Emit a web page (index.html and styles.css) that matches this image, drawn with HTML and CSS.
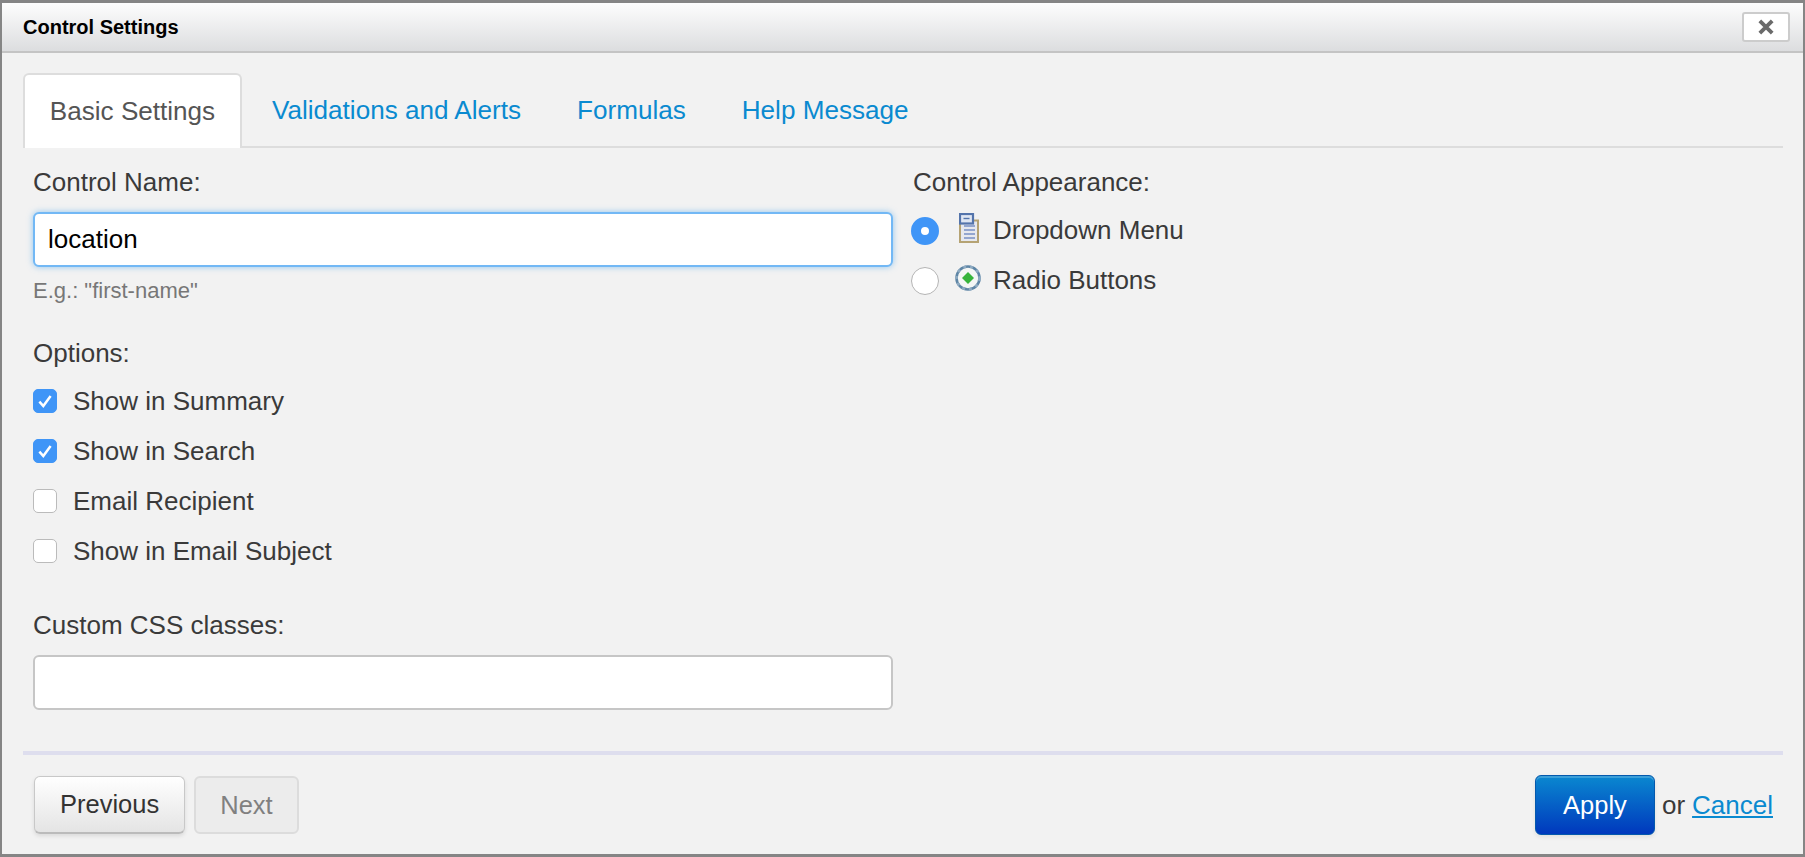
FILE: index.html
```html
<!DOCTYPE html>
<html lang="en">
<head>
    <meta charset="UTF-8">
    <title>Control Settings</title>
    <link rel="stylesheet" href="styles.css">
</head>
<body>
<div class="dialog">
    <!-- Title bar -->
    <div class="titlebar">
        <span class="title">Control Settings</span>
        <button class="close" type="button" aria-label="Close">
            <svg width="18" height="18" viewBox="0 0 16 16"><path d="M2.5 2.5L13.5 13.5M13.5 2.5L2.5 13.5" stroke="#6a6a6a" stroke-width="3.4" fill="none"/></svg>
        </button>
    </div>

    <div class="content">
        <!-- Tabs -->
        <ul class="tabs">
            <li class="tab active">Basic Settings</li>
            <li class="tab"><a href="#">Validations and Alerts</a></li>
            <li class="tab"><a href="#">Formulas</a></li>
            <li class="tab"><a href="#">Help Message</a></li>
        </ul>

        <div class="columns">
            <div class="col-left">
                <div class="label first">Control Name:</div>
                <input class="text-input focused" type="text" value="location">
                <div class="hint">E.g.: "first-name"</div>

                <div class="label options-label">Options:</div>
                <label class="check-row">
                    <span class="check on"><svg width="18" height="18" viewBox="0 0 16 16"><path d="M3 8.5L6.5 12.5L13 3.5" stroke="#fff" stroke-width="2.2" fill="none"/></svg></span>
                    Show in Summary
                </label>
                <label class="check-row">
                    <span class="check on"><svg width="18" height="18" viewBox="0 0 16 16"><path d="M3 8.5L6.5 12.5L13 3.5" stroke="#fff" stroke-width="2.2" fill="none"/></svg></span>
                    Show in Search
                </label>
                <label class="check-row"><span class="check"></span>Email Recipient</label>
                <label class="check-row"><span class="check"></span>Show in Email Subject</label>

                <div class="label css-label">Custom CSS classes:</div>
                <input class="text-input" type="text">
            </div>

            <div class="col-right">
                <div class="label first">Control Appearance:</div>
                <label class="radio-row">
                    <span class="radio on"></span>
                    <svg class="row-icon" width="20" height="30" viewBox="0 0 20 30">
                        <rect x="1" y="7.5" width="18" height="21.5" fill="#e6e8ee" stroke="#b5a374" stroke-width="2"/>
                        <path d="M5 13H16M5 17H16M5 21H16M5 25H16" stroke="#93a6cf" stroke-width="2"/>
                        <rect x="1" y="1" width="13" height="9.5" fill="#dfe6f2" stroke="#5474ab" stroke-width="2.2"/>
                        <path d="M4.5 5.5H10.5" stroke="#5474ab" stroke-width="1.4"/>
                    </svg>
                    Dropdown Menu
                </label>
                <label class="radio-row">
                    <span class="radio"></span>
                    <svg class="row-icon round" width="26" height="26" viewBox="0 0 26 26">
                        <circle cx="13" cy="13" r="11.5" fill="#f4f6f5" stroke="#5f86a6" stroke-width="2.6"/>
                        <circle cx="13" cy="13" r="11.5" fill="none" stroke="#8fabc2" stroke-width="2.6" stroke-dasharray="3 4"/>
                        <path d="M13 7L19 13L13 19L7 13Z" fill="#37b43c"/>
                    </svg>
                    Radio Buttons
                </label>
            </div>
        </div>

        <!-- Footer -->
        <div class="footer">
            <div class="footer-left">
                <button class="btn" type="button">Previous</button>
                <button class="btn disabled" type="button">Next</button>
            </div>
            <div class="footer-right">
                <button class="btn-primary" type="button">Apply</button>
                <span class="or">or</span>
                <a class="cancel" href="#">Cancel</a>
            </div>
        </div>
    </div>
</div>
</body>
</html>
```

FILE: styles.css
```css
* {
    box-sizing: border-box;
}
html, body {
    height: 100%;
}
body {
    margin: 0;
    font-family: "Liberation Sans", Arial, sans-serif;
    font-size: 26px;
    color: #3a3a3a;
    background-color: #f2f2f2;
}
.dialog {
    height: 857px;
    border: solid #858585;
    border-width: 3px 2px 3px 2px;
    display: flex;
    flex-direction: column;
}
.titlebar {
    height: 50px;
    flex: none;
    display: flex;
    align-items: center;
    justify-content: space-between;
    padding: 0 13px 0 21px;
    background: linear-gradient(#fdfdfd, #dcdddf);
    border-bottom: 2px solid #c4c4c4;
}
.title {
    font-size: 20px;
    font-weight: bold;
    color: #000;
}
.close {
    width: 48px;
    height: 30px;
    padding: 0;
    display: flex;
    align-items: center;
    justify-content: center;
    background-color: #fff;
    border: 2px solid #ccc;
    border-radius: 3px;
}
.content {
    flex: 1;
    padding: 20px 20px 0 21px;
    display: flex;
    flex-direction: column;
}
.tabs {
    list-style: none;
    margin: 0;
    padding: 0;
    height: 75px;
    flex: none;
    display: flex;
    border-bottom: 2px solid #ddd;
}
.tab {
    height: 75px;
    padding: 23px 28px 0 28px;
    line-height: 28px;
    font-size: 26.1px;
}
.tab a {
    color: #0a8ad0;
    text-decoration: none;
}
.tab.active {
    width: 219px;
    padding: 22px 0 0 0;
    margin-right: 2px;
    text-align: center;
    color: #555;
    background-color: #fff;
    border: 2px solid #ddd;
    border-bottom: 0;
    border-radius: 6px 6px 0 0;
}
.columns {
    flex: 1;
    display: grid;
    grid-template-columns: 860px 1fr;
    column-gap: 18px;
    padding-left: 10px;
}
.label {
    line-height: 28px;
}
.label.first {
    margin-top: 20px;
}
.text-input {
    display: block;
    width: 100%;
    height: 55px;
    padding: 0 13px;
    font-family: inherit;
    font-size: 26px;
    color: #000;
    background-color: #fff;
    border: 2px solid #c6c6c6;
    border-radius: 6px;
    outline: none;
}
.text-input.focused {
    margin-top: 16px;
    border-color: #72b8f5;
    box-shadow: 0 0 6px rgba(82, 168, 236, 0.6);
}
.hint {
    margin-top: 11px;
    font-size: 22px;
    line-height: 26px;
    color: #777;
}
.options-label {
    margin-top: 35px;
}
.check-row {
    height: 50px;
    display: flex;
    align-items: center;
}
.options-label + .check-row {
    margin-top: 9px;
}
.check {
    width: 24px;
    height: 24px;
    margin-right: 16px;
    display: flex;
    align-items: center;
    justify-content: center;
    background-color: #fff;
    border: 1px solid #bbb;
    border-radius: 5px;
}
.check.on {
    background-color: #3f95f7;
    border-color: #3f95f7;
}
.css-label {
    margin-top: 35px;
    margin-bottom: 16px;
}
.radio-row {
    height: 50px;
    display: flex;
    align-items: center;
}
.col-right .label.first {
    padding-left: 2px;
}
.label.first + .radio-row {
    margin-top: 9px;
}
.radio {
    width: 28px;
    height: 28px;
    margin: 2px 20px 0 0;
    flex: none;
    background-color: #fff;
    border: 1px solid #b4b4b4;
    border-radius: 50%;
}
.radio.on {
    border: 10px solid #3f95f7;
}
.row-icon {
    margin-top: -4px;
    margin-right: 14px;
    flex: none;
}
.row-icon.round {
    margin-left: -4px;
    margin-right: 12px;
}
.footer {
    height: 103px;
    flex: none;
    display: flex;
    align-items: flex-start;
    justify-content: space-between;
    padding: 20px 10px 0 11px;
    border-top: 4px solid #dedeee;
}
.footer-left {
    margin-top: 1px;
    display: flex;
    gap: 9px;
}
.footer-right {
    display: flex;
    align-items: center;
}
.btn {
    height: 58px;
    padding: 0 25px;
    font-family: inherit;
    font-size: 25.5px;
    color: #333;
    background: linear-gradient(#fff, #e4e4e4);
    border: 1px solid #c8c8c8;
    border-bottom: 2px solid #bbb;
    border-radius: 6px;
    box-shadow: 0 2px 4px rgba(0, 0, 0, 0.1);
}
.btn.disabled {
    padding: 0 24px;
    color: #808080;
    background: #ececec;
    border: 2px solid #dcdcdc;
    box-shadow: none;
}
.btn-primary {
    width: 120px;
    height: 60px;
    padding: 0;
    font-family: inherit;
    font-size: 25.5px;
    color: #fff;
    background: linear-gradient(#0a88d0, #0038bd);
    border: 1px solid #0459ad;
    border-radius: 6px;
    box-shadow: inset 0 2px 0 rgba(255, 255, 255, 0.2), 0 2px 4px rgba(0, 0, 0, 0.08);
}
.or {
    margin: 0 7px;
}
.cancel {
    color: #0a8ad0;
}
```
